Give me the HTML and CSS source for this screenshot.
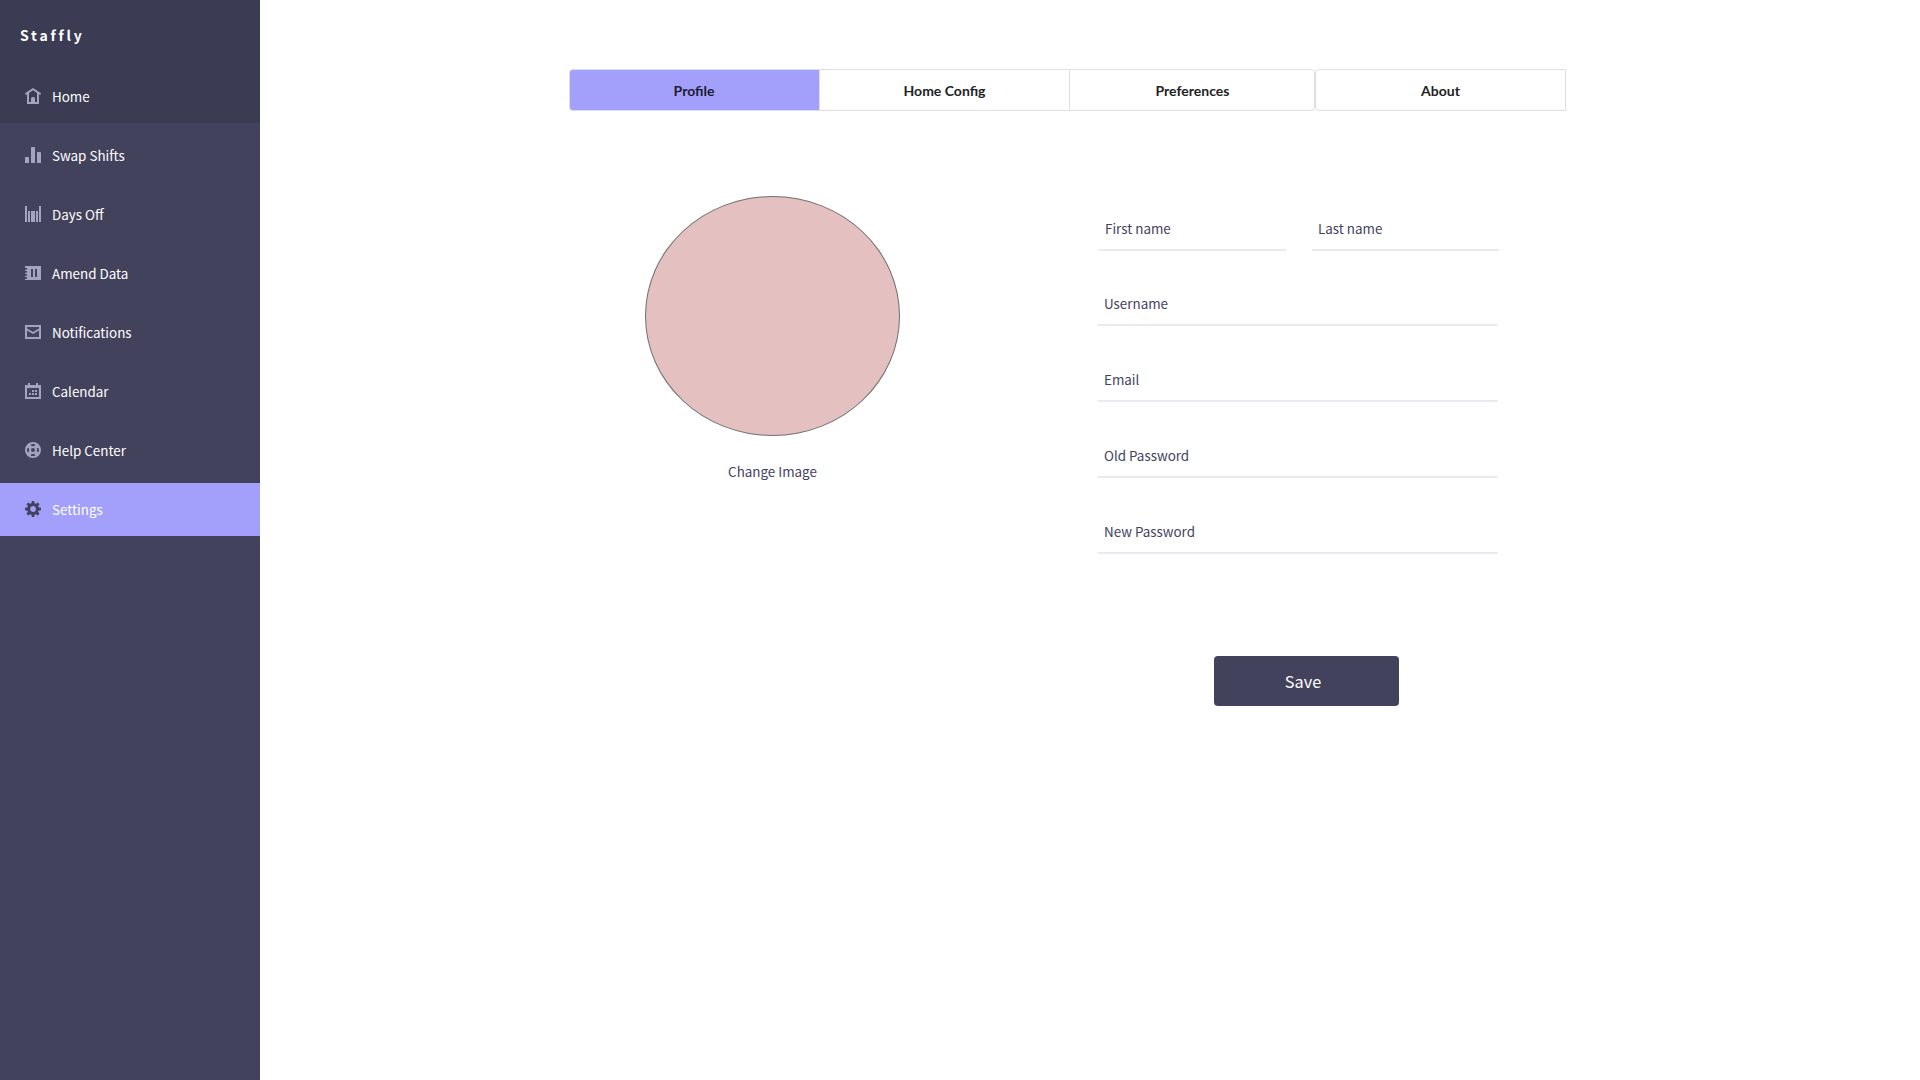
FILE: index.html
```html
<!DOCTYPE html>
<html lang="en">
<head>
<meta charset="utf-8">
<title>Staffly</title>
<link rel="stylesheet" href="styles.css">
</head>
<body>
<aside class="sidebar">
  <div class="sidebar-top">
    <div class="brand">Staffly</div>
    <a class="nav-item"><svg class="icon" viewBox="0 0 16 16"><path fill-rule="evenodd" d="M8 0 16 5.2 15.2 7 14 6.3V16H2V6.3L.8 7 0 5.2ZM8 2.2 4 4.9V14H6V10.5A1.5 1.5 0 0 1 7.5 9H8.5A1.5 1.5 0 0 1 10 10.500V14H12V4.900Z"/></svg>Home</a>
  </div>
  <nav class="nav">
    <a class="nav-item"><svg class="icon" viewBox="0 0 16 16"><rect y="10" width="4" height="6" rx=".6"/><rect x="6" width="4" height="16" rx=".6"/><rect x="12" y="5" width="4" height="11" rx=".6"/></svg>Swap Shifts</a>
    <a class="nav-item"><svg class="icon" viewBox="0 0 16 16"><path d="M0 0H2V16H0ZM3 5H5V16H3ZM6 5H10V16H6ZM11 5H13V16H11ZM14 0H16V16H14Z"/></svg>Days Off</a>
    <a class="nav-item"><svg class="icon" viewBox="0 0 16 16"><path fill-rule="evenodd" d="M0 1H16V15H0V14L2 13.500V12H0V11L2 10.500V9H0V8L2 7.500V6H0V5L2 4.500V3H0ZM6 4V12H8V4ZM10 4V12H12V4Z"/></svg>Amend Data</a>
    <a class="nav-item"><svg class="icon" viewBox="0 0 16 16"><path fill-rule="evenodd" d="M0 1H16V15H0ZM2 3V4.500L8 8 14 4.500V3ZM2 6.500V13H14V6.500L8 10Z"/></svg>Notifications</a>
    <a class="nav-item"><svg class="icon" viewBox="0 0 16 16"><path fill-rule="evenodd" d="M3 0H5V2H11V0H13V2H16V16H0V2H3ZM2 5V14H14V5Z"/><path d="M7 7H9V9H7ZM10 7H12V9H10ZM4 10H6V12H4ZM7 10H9V12H7ZM10 10H12V12H10Z"/></svg>Calendar</a>
    <a class="nav-item"><svg class="icon" viewBox="0 0 16 16"><path fill-rule="evenodd" d="M8 0A8 8 0 1 1 8 16 8 8 0 0 1 8 0ZM8 6A2 2 0 1 0 8 10 2 2 0 0 0 8 6ZM5.700 2.500 6.600 4.300Q8 3.700 9.400 4.300L10.300 2.500Q8 1.500 5.700 2.500ZM5.700 13.500 6.600 11.700Q8 12.300 9.400 11.700L10.300 13.500Q8 14.500 5.700 13.500ZM2.500 5.700 4.300 6.600Q3.700 8 4.300 9.400L2.500 10.300Q1.500 8 2.500 5.700ZM13.500 5.700 11.700 6.600Q12.300 8 11.700 9.400L13.500 10.300Q14.500 8 13.500 5.700Z"/></svg>Help Center</a>
    <a class="nav-item active"><svg class="icon" viewBox="0 0 16 16"><circle class="gear-ring" cx="8" cy="8" r="4.400"/><path d="M6.800 0H9.200L9.700 3H6.300ZM6.800 16H9.200L9.700 13H6.300ZM0 6.800V9.200L3 9.700V6.300ZM16 6.800V9.200L13 9.700V6.300ZM1.500 3.200 3.200 1.500 5.700 3.300 3.300 5.700ZM14.500 3.200 12.800 1.500 10.300 3.300 12.700 5.700ZM1.500 12.800 3.200 14.500 5.700 12.700 3.300 10.300ZM14.500 12.800 12.800 14.500 10.300 12.700 12.700 10.300Z"/></svg>Settings</a>
  </nav>
</aside>
<main class="main">
  <div class="tabs">
    <div class="tab-group">
      <button class="tab selected">Profile</button>
      <button class="tab">Home Config</button>
      <button class="tab last">Preferences</button>
    </div>
    <button class="tab about">About</button>
  </div>
  <div class="content">
    <section class="photo">
      <div class="avatar"></div>
      <a class="change">Change Image</a>
    </section>
    <form class="form">
      <div class="names">
        <label class="field">First name</label>
        <label class="field">Last name</label>
      </div>
      <label class="field">Username</label>
      <label class="field">Email</label>
      <label class="field">Old Password</label>
      <label class="field">New Password</label>
      <button class="save" type="button">Save</button>
    </form>
  </div>
</main>
</body>
</html>
```
FILE: styles.css
```css
* { box-sizing: border-box; }

body {
  margin: 0;
  height: 1080px;
  display: flex;
  background: #fff;
  color: #43425d;
  font: 13.4px/20px "Noto Sans CJK SC", sans-serif;
}

button { font: inherit; border: 0; padding: 0; }

.sidebar { width: 260px; background: #43425d; color: #fff; }
.sidebar-top { height: 123px; background: #3c3b54; }
.brand {
  height: 70px;
  padding: 25px 0 0 20px;
  font-size: 14px;
  font-weight: 700;
  letter-spacing: 2.8px;
}
.nav { padding-top: 6px; }
.nav-item {
  display: flex;
  align-items: center;
  gap: 11px;
  height: 53px;
  margin-bottom: 6px;
  padding: 0 0 1px 25px;
}
.icon { width: 16px; height: 16px; fill: #a5a4bf; }
.active { background: #a3a0fb; }
.active .icon { fill: #43425d; }
.active .gear-ring { fill: none; stroke: #43425d; stroke-width: 3; }

.main { flex: 1; padding: 69px 0 0 309px; }
.tabs { display: flex; }
.tab-group { display: flex; width: 746px; }
.tab {
  width: 250px;
  height: 42px;
  padding-top: 2px;
  border: 1px solid #dededf;
  border-right: 0;
  background: #fff;
  color: #222;
  font: 700 14px/20px Lato, sans-serif;
}
.tab.selected {
  padding-right: 1px;
  background: #a3a0fb;
  color: #1b1b33;
  border-radius: 4px 0 0 4px;
}
.tab.last {
  width: 246px;
  padding-left: 1px;
  border-right: 1px solid #dededf;
  border-radius: 0 4px 4px 0;
}
.tab.about { width: 251px; border-right: 1px solid #dededf; border-radius: 4px 0 0 4px; }

.content { display: flex; padding: 85px 0 0 76px; }
.photo { width: 255px; text-align: center; }
.avatar {
  height: 240px;
  border: 1px solid #707070;
  border-radius: 50%;
  background: #e4c0c0;
}
.change { display: block; margin-top: 25px; }

.form { width: 401px; margin-left: 198px; padding-top: 22px; }
.names { display: flex; gap: 26px; margin-left: 1px; }
.field {
  display: block;
  width: 400px;
  height: 33px;
  margin-bottom: 43px;
  padding-left: 6px;
  border-bottom: 2px solid #e9e9f0;
}
.names .field { width: 187px; margin-bottom: 42px; }
.save {
  display: block;
  width: 185px;
  height: 50px;
  margin: 102px 0 0 116px;
  padding: 0 7px 0 0;
  border-radius: 4px;
  background: #43425d;
  color: #fff;
  font-size: 16.3px;
}
```
